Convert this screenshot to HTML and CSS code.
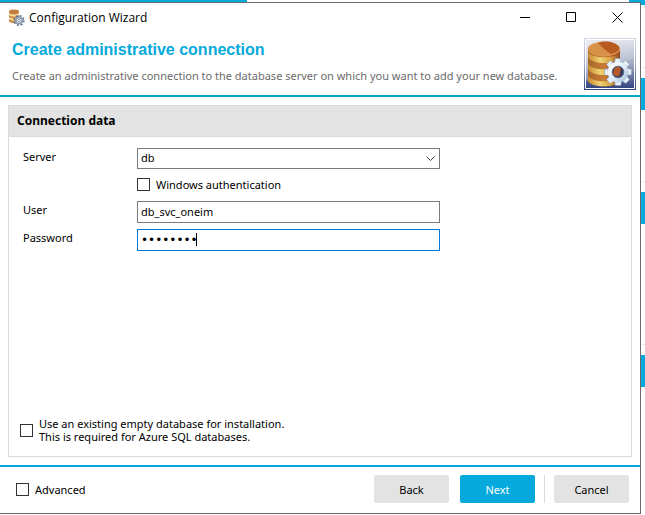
FILE: index.html
```html
<!DOCTYPE html>
<html lang="en">
<head>
<meta charset="utf-8">
<title>Configuration Wizard</title>
<link rel="stylesheet" href="styles.css">
</head>
<body>
<div class="desk-top"><span class="desk-tab"></span><span class="desk-corner"></span></div>
<div class="desk">
  <main class="window">
    <div class="titlebar">
      <svg class="app-icon" viewBox="0 0 17 17" aria-hidden="true">
        <path d="M1 2v10c0 1 2 2 5 2s5-1 5-2V2z" fill="#c98a45"/>
        <path d="M1 4c3 2 7 2 10 0v2c-3 2-7 2-10 0zM1 8c3 2 7 2 10 0v2c-3 2-7 2-10 0z" fill="#f5dfa0"/>
        <ellipse cx="6" cy="2.5" rx="5" ry="2" fill="#c47a3e"/>
        <circle cx="11" cy="11.500" r="4.700" fill="none" stroke="#596b82" stroke-width="1.800" stroke-dasharray="1.850 1.840"/>
        <circle cx="11" cy="11.500" r="3.200" fill="#fff" stroke="#8c9db5" stroke-width="1.800"/>
        <circle cx="11" cy="11.500" r="1.300" fill="#fff" stroke="#52647c" stroke-width=".7"/>
      </svg>
      <span class="window-title">Configuration Wizard</span>
      <button class="caption" aria-label="Minimize"><svg viewBox="0 0 11 11"><path d="M0 5.500h10"/></svg></button>
      <button class="caption" aria-label="Maximize"><svg viewBox="0 0 11 11"><path d="M.5.5h9v9h-9z"/></svg></button>
      <button class="caption" aria-label="Close"><svg viewBox="0 0 11 11"><path d="M.5.5l10 10M10.500.5l-10 10"/></svg></button>
    </div>
    <header class="banner">
      <div class="banner-text">
        <h1>Create administrative connection</h1>
        <p>Create an administrative connection to the database server on which you want to add your new database.</p>
      </div>
      <svg class="banner-icon" viewBox="0 0 52 52" aria-hidden="true">
        <defs>
          <linearGradient id="tile" x1="0" y1="0" x2="0" y2="1"><stop offset="0" stop-color="#d3d7e3"/><stop offset=".5" stop-color="#a2a9c2"/><stop offset="1" stop-color="#344380"/></linearGradient>
          <linearGradient id="shine" x1="0" y1="0" x2="1" y2="1"><stop offset="0" stop-color="#fff" stop-opacity=".55"/><stop offset="1" stop-color="#fff" stop-opacity="0"/></linearGradient>
          <linearGradient id="gold" x1="0" y1="0" x2="1" y2="0"><stop offset="0" stop-color="#c68c32"/><stop offset=".38" stop-color="#f0d273"/><stop offset=".7" stop-color="#d9a343"/><stop offset="1" stop-color="#8f4920"/></linearGradient>
          <linearGradient id="core" x1="0" y1="0" x2="1" y2="0"><stop offset="0" stop-color="#a8672a"/><stop offset=".5" stop-color="#c77c35"/><stop offset="1" stop-color="#a33318"/></linearGradient>
          <linearGradient id="steel" x1="0" y1="0" x2="1" y2="1"><stop offset="0" stop-color="#fff"/><stop offset=".6" stop-color="#dce9f5"/><stop offset="1" stop-color="#a8c3dd"/></linearGradient>
        </defs>
        <path d="M0 0h52v52H0z" fill="url(#tile)"/>
        <path d="M1.500 1.500h49v49h-49z" fill="url(#tile)" stroke="#fff"/>
        <path d="M2 2h48v18L2 43z" fill="url(#shine)"/>
        <path d="M4 11v32c3 7 29 7 32 0V11z" fill="url(#core)"/>
        <path d="M4 14c4 7 28 7 32 0v5c-4 8-28 8-32 0zM4 26c4 7 28 7 32 0v5c-4 8-28 8-32 0zM4 38c4 7 28 7 32 0v5c-4 7-28 7-32 0z" fill="url(#gold)"/>
        <ellipse cx="20" cy="11" rx="16" ry="7" fill="#d99048" stroke="#e0a050" stroke-width=".7"/>
        <path d="M20 11L14 5c7-3 18-1 21 4 1 4-4 6-8 7z" fill="#b75b20"/>
        <g transform="translate(34 34)">
          <g fill="url(#steel)" stroke="#7f96b4" stroke-width=".5">
            <path id="tooth" d="M-3.500-9l.8-4.500h5.400l.8 4.500z"/>
            <use href="#tooth" transform="rotate(45)"/><use href="#tooth" transform="rotate(90)"/><use href="#tooth" transform="rotate(135)"/><use href="#tooth" transform="rotate(180)"/><use href="#tooth" transform="rotate(225)"/><use href="#tooth" transform="rotate(270)"/><use href="#tooth" transform="rotate(315)"/>
          </g>
          <circle r="8" fill="none" stroke="url(#steel)" stroke-width="4.500"/>
          <circle r="5.800" fill="#3c3955" stroke="#58719b"/>
          <path d="M-4-3c2-3 6-3 7 0l-2 7c-3 1-6-1-6-3z" fill="#b65a2c"/>
        </g>
      </svg>
    </header>
    <form class="content" id="connection">
      <section class="panel">
        <h2>Connection data</h2>
        <div class="fields">
          <label for="server">Server</label>
          <div class="combo">
            <select id="server"><option>db</option></select>
            <svg class="chevron" viewBox="0 0 9 6" aria-hidden="true"><path d="M.5.500l4 4 4-4"/></svg>
          </div>
          <label class="check auth"><input type="checkbox">Windows authentication</label>
          <label for="user">User</label>
          <input class="text" id="user" type="text" value="db_svc_oneim">
          <label for="password">Password</label>
          <div class="secret">
            <input class="text active" id="password" type="password" value="password">
            <span class="caret"></span>
          </div>
        </div>
        <label class="check existing"><input type="checkbox"><span>Use an existing empty database for installation.<br>This is required for Azure SQL databases.</span></label>
      </section>
    </form>
    <footer class="actions">
      <label class="check advanced"><input type="checkbox">Advanced</label>
      <button class="btn">Back</button>
      <button class="btn primary">Next</button>
      <span class="divider"></span>
      <button class="btn">Cancel</button>
    </footer>
  </main>
  <div class="desk-side">
    <span class="tile first"></span>
    <span class="tile"></span>
    <span class="tile"></span>
    <span class="tile last"></span>
  </div>
</div>
</body>
</html>
```
FILE: styles.css
```css
* { box-sizing: border-box; }

body {
  margin: 0;
  min-height: 100vh;
  display: flex;
  flex-direction: column;
  background: #fff;
  color: #000;
  font: 11px/13px "Noto Sans", "Open Sans", sans-serif;
}

button, input, select { font: inherit; color: inherit; }

/* Page behind the window */
.desk-top { display: flex; justify-content: space-between; height: 2px; }
.desk-tab { width: 247px; background: #05a9dc; }
.desk-corner { width: 16px; background: #05a9dc; }
.desk { flex: 1; display: flex; padding-bottom: 1px; }
.desk-side { width: 4px; }
.tile {
  display: block;
  height: 43px;
  margin-bottom: 71px;
  border-top: 1px solid #eee;
  background: linear-gradient(#fff 10px, #05a9dc 10px);
}
.tile.first {
  height: 3px;
  margin-bottom: 62px;
  border: 0;
  background: #05a9dc;
}
.tile.last { margin-top: 120px; }

/* Window frame */
.window {
  flex: 1;
  min-width: 0;
  display: flex;
  flex-direction: column;
  border: 1px solid #6c6c6c;
  border-left: 0;
  background: #fff;
}
.titlebar { display: flex; align-items: center; height: 29px; padding-left: 8px; }
.app-icon { width: 17px; height: 17px; }
.window-title { flex: 1; padding-left: 4px; font: 12px/16px "Open Sans", "Noto Sans", sans-serif; }
.caption {
  width: 46px;
  height: 29px;
  padding: 0;
  border: 0;
  background: none;
}
.caption svg {
  display: block;
  width: 11px;
  height: 11px;
  margin: 0 auto;
  fill: none;
  stroke: #000;
}

/* Banner */
.banner {
  display: flex;
  justify-content: space-between;
  height: 65px;
  padding: 6px 4px 0 12px;
  border-bottom: 2px solid #05a9c9;
}
.banner-text { white-space: nowrap; }
h1 {
  margin: 4px 0 10px;
  color: #05a9dc;
  font: bold 16px/16px "Liberation Sans", Arial, sans-serif;
}
.banner p { margin: 0; line-height: 16px; color: #6b6b6b; }
.banner-icon { flex: none; width: 52px; height: 52px; }

/* Connection panel */
.content { flex: 1; display: flex; padding: 8px; }
.panel {
  flex: 1;
  display: flex;
  flex-direction: column;
  border: 1px solid #dadada;
}
h2 {
  margin: 0;
  padding: 0 8px;
  border-bottom: 1px solid #dadada;
  background: #e3e3e3;
  font-size: 12px;
  line-height: 30px;
}
.fields {
  display: grid;
  grid-template-columns: 114px minmax(0, 303px);
  grid-template-rows: 21px 20px 22px 22px;
  row-gap: 6px;
  padding: 11px 14px;
}
.fields > label { line-height: 17px; }
.combo, .secret { position: relative; display: flex; }
.text, select {
  width: 100%;
  height: 100%;
  margin: 0;
  padding: 0 3px 2px;
  border: 1px solid #7a7a7a;
  border-radius: 0;
  outline: 0;
  background: #fff;
  appearance: none;
}
.text.active {
  padding-bottom: 0;
  border-color: #0078d7;
  font: 12px "DejaVu Sans", sans-serif;
}
.chevron {
  position: absolute;
  right: 5px;
  top: 8px;
  width: 9px;
  height: 6px;
  fill: none;
  stroke: #444;
}
.caret {
  position: absolute;
  left: 59px;
  top: 4px;
  width: 1px;
  height: 13px;
  background: #000;
}

.check { display: flex; align-items: center; gap: 6px; }
.check input {
  flex: none;
  width: 13px;
  height: 13px;
  margin: 0;
  border: 1px solid #333;
  background: #fff;
  appearance: none;
}
.check input:checked { background: #05a9dc; }
.auth { grid-column: 2; padding-bottom: 2px; }
.existing { margin: auto 0 13px; padding-left: 11px; }

/* Footer */
.actions {
  display: flex;
  align-items: center;
  height: 48px;
  padding: 0 11px 2px 16px;
  border-top: 2px solid #05a9dc;
}
.advanced { flex: 1; }
.btn {
  width: 75px;
  height: 28px;
  padding: 0;
  border: 0;
  border-radius: 2px;
  background: #e3e3e3;
}
.btn.primary { margin-left: 11px; background: #05a9dc; color: #fff; }
.divider { width: 1px; height: 28px; margin: 0 9px; background: #dadada; }
```
